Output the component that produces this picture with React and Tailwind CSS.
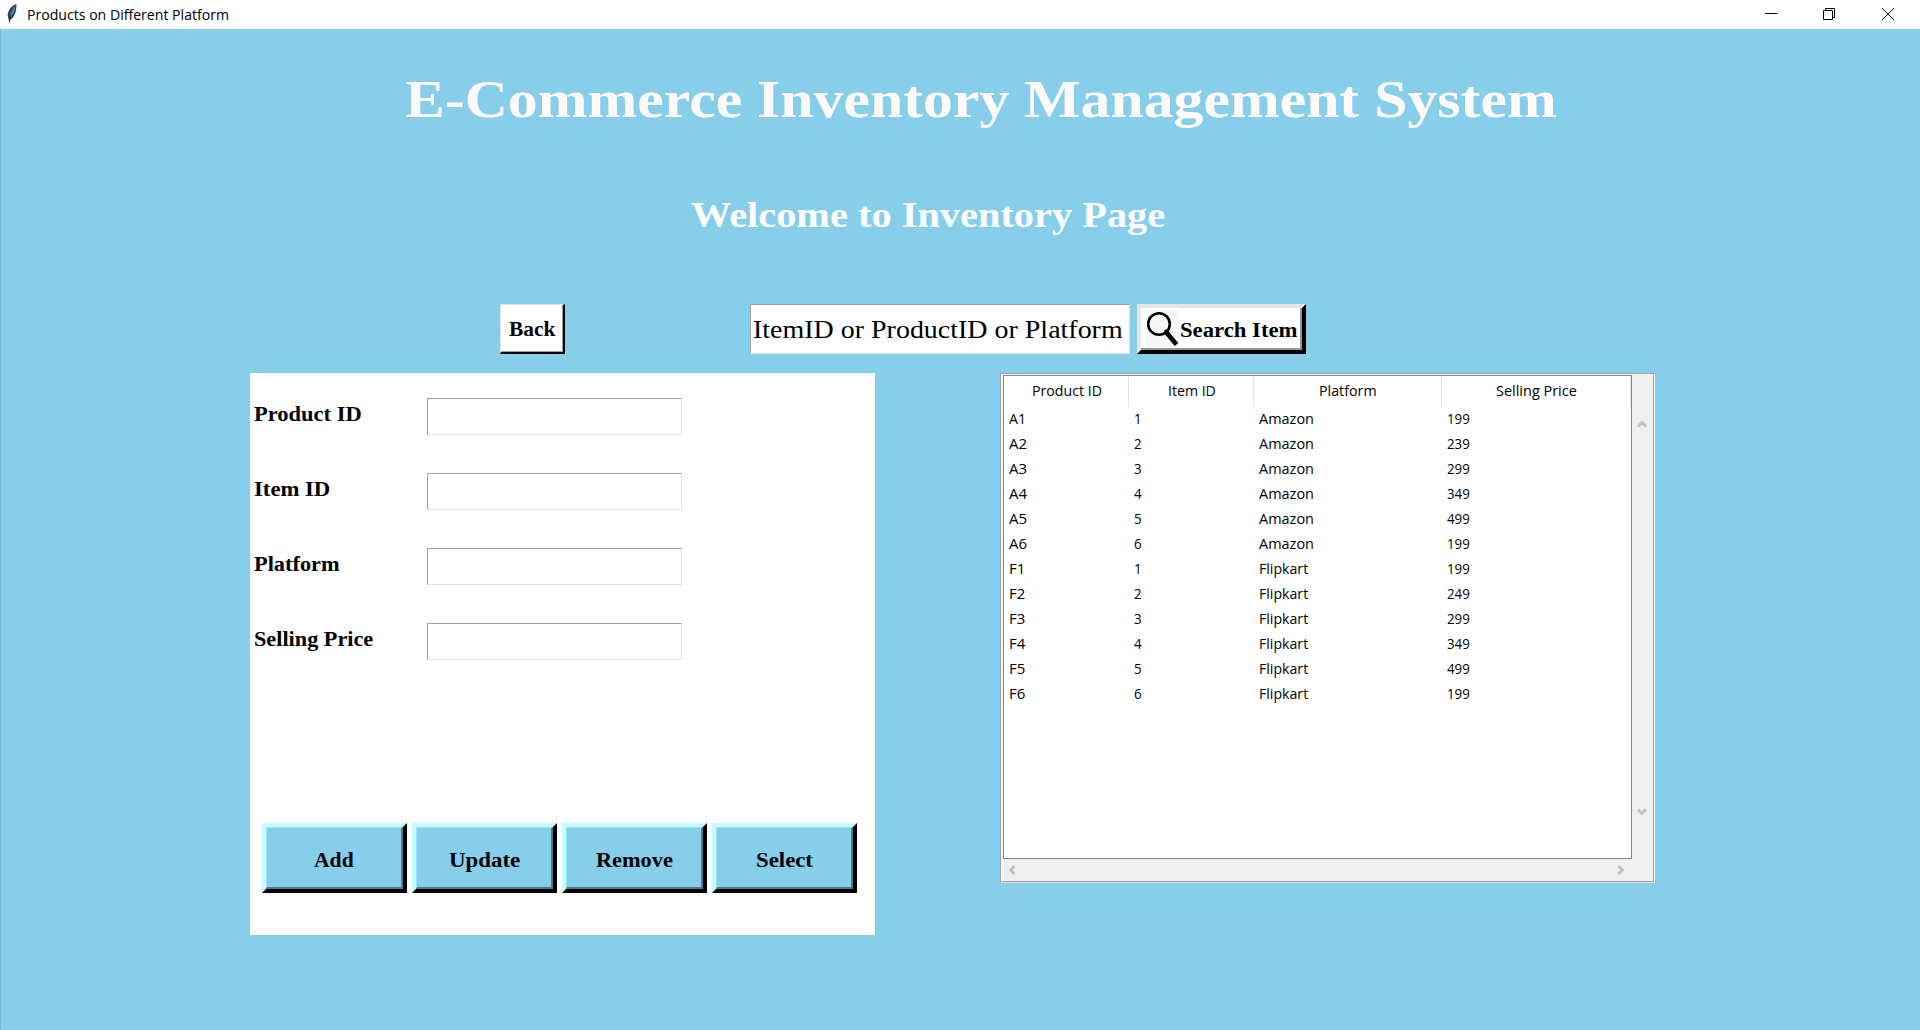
import { useLayoutEffect, useRef, useState } from "react";

const SERIF = "font-['Georgia','Liberation_Serif',serif]";
const SANS = "font-['Segoe_UI','Open_Sans',sans-serif]";

// A line of text stretched horizontally to a set width.
function Fit({ w, className = "", children }) {
  const ref = useRef(null);
  const [scale, setScale] = useState(1);
  useLayoutEffect(() => {
    setScale(w / ref.current.offsetWidth);
  }, [w]);
  return (
    <span className={"block " + className} style={{ width: w }}>
      <span ref={ref} className="inline-block origin-left whitespace-nowrap" style={{ transform: `scaleX(${scale})` }}>
        {children}
      </span>
    </span>
  );
}

function TitleBar() {
  return (
    <header className={"flex h-[29px] items-start bg-white text-black " + SANS}>
      <svg className="ml-[5px] mt-[3px] h-[21px] w-[14px]" viewBox="0 0 14 21">
        <path d="M11.5 1C7 2 3 7 2.6 12.5L3.5 16l1 4 1-3.5C9.500 14 11.500 9 11.500 1z" fill="#33404f" />
        <path d="M10.500 2.500C8 4 5 8 4.300 14.500C8 12 10 8 10.500 2.500z" fill="#5b8fd6" />
        <path d="M9.500 3.500C7 7 5 11 4.500 19" fill="none" stroke="#1d2530" strokeWidth="0.8" />
      </svg>
      <Fit w={202} className="ml-[8px] text-[15px] leading-[28px]">Products on Different Platform</Fit>
      <svg className="ml-auto mr-[25px] mt-[7px] h-[14px] w-[130px]" viewBox="0 0 130 14" fill="none" stroke="#000" strokeWidth="1">
        <path d="M0 6.500H12" />
        <path d="M58.500 3.500h9v9h-9zM60.500 3.500v-2h9v9h-2" />
        <path d="M117 1.200L129 13M129 1.200L117 13" />
      </svg>
    </header>
  );
}

function Toolbar() {
  return (
    <div className="mt-[68px] flex h-[50px] pl-[500px]">
      <button className="h-[50px] w-[65px] border border-t-[#e3e3e3] border-l-[#e3e3e3] border-r-2 border-b-2 border-r-black border-b-black bg-white">
        <span className="flex h-full w-full items-center justify-center border-r border-b border-[#a0a0a0] font-bold">
          <Fit w={46} className="pt-[2px] text-left text-[20px] leading-[46px]">Back</Fit>
        </span>
      </button>
      <div className="ml-[185px] h-[50px] w-[380px] border border-t-[#a0a0a0] border-l-[#a0a0a0] border-r-[#e3e3e3] border-b-[#e3e3e3] bg-white">
        <Fit w={370} className="ml-[2px] text-[26px] leading-[49px]">ItemID or ProductID or Platform</Fit>
      </div>
      <button className="ml-[7px] h-[50px] w-[169px] border-4 border-t-[#e5e5e5] border-l-[#e5e5e5] border-r-black border-b-black bg-white">
        <span className="flex h-full w-full items-center border-r-2 border-b-2 border-[#969696] font-bold">
          <span className="ml-[5px] flex h-[37px] w-[33px] bg-[#f6f6f6]">
            <svg className="h-[37px] w-[33px]" viewBox="0 0 33 37" fill="none" stroke="#000">
              <circle cx="13" cy="14" r="10.800" strokeWidth="2.600" />
              <path d="M20.500 22.500L30.500 34.500" strokeWidth="4.600" />
              <path d="M19 20l3 4" strokeWidth="2.500" />
            </svg>
          </span>
          <Fit w={118} className="ml-px pt-[3px] text-left text-[20px] leading-[46px]">Search Item</Fit>
        </span>
      </button>
    </div>
  );
}

const FIELDS = [
  ["Product ID", 108],
  ["Item ID", 76],
  ["Platform", 86],
  ["Selling Price", 119],
];

const ACTIONS = [
  ["Add", 40],
  ["Update", 71],
  ["Remove", 77],
  ["Select", 57],
];

function FormPanel() {
  return (
    <section className="flex h-[562px] w-[625px] flex-col bg-white pt-[24px] font-bold">
      {FIELDS.map(([label, w]) => (
        <div key={label} className="flex h-[75px] items-start pl-[4px]">
          <div className="w-[173px]">
            <Fit w={w} className="text-[20px] leading-[34px]">{label}</Fit>
          </div>
          <div className="mt-px h-[37px] w-[255px] border border-t-[#a0a0a0] border-l-[#a0a0a0] border-r-[#e3e3e3] border-b-[#e3e3e3]" />
        </div>
      ))}
      <div className="mt-[126px] flex gap-[5px] pl-[12px]">
        {ACTIONS.map(([label, w]) => (
          <button
            key={label}
            className="h-[70px] w-[145px] border-4 border-t-[#c2ffff] border-l-[#c2ffff] border-r-black border-b-black bg-[#87ceeb]"
          >
            <span className="flex h-full w-full items-center justify-center border-t border-l border-r-2 border-b-2 border-t-[#9ee0f2] border-l-[#9ee0f2] border-r-[#51798b] border-b-[#51798b]">
              <Fit w={w} className="pt-[4px] text-left text-[20px] leading-[54px]">{label}</Fit>
            </span>
          </button>
        ))}
      </div>
    </section>
  );
}

const HEADS = [
  ["Product ID", 70],
  ["Item ID", 48],
  ["Platform", 58],
  ["Selling Price", 81],
];

const PRICES = [199, 239, 299, 349, 499, 199, 199, 249, 299, 349, 499, 199];

const ROWS = PRICES.map((price, i) => ({
  id: (i < 6 ? "A" : "F") + ((i % 6) + 1),
  item: (i % 6) + 1,
  platform: i < 6 ? "Amazon" : "Flipkart",
  price,
}));

const COLS = "grid grid-cols-[125px_125px_188px_189px]";

function Chevron({ d, className = "" }) {
  return (
    <svg className={"h-[10px] w-[10px] " + className} viewBox="0 0 10 10" fill="none" stroke="#bfbfbf" strokeWidth="2.800">
      <path d={d} />
    </svg>
  );
}

function TablePanel() {
  return (
    <section
      className={
        "ml-[125px] flex h-[510px] w-[655px] flex-col border border-t-[#a0a0a0] border-l-[#a0a0a0] border-r-white border-b-[#e3e3e3] text-black " +
        SANS
      }
    >
      <div className="flex grow flex-col border border-t-white border-l-white border-r-[#a0a0a0] border-b-[#a0a0a0] bg-[#f0f0f0]">
        <div className="flex">
          <div className="ml-px h-[484px] w-[629px] border border-[#828790] bg-white text-[15px]">
            <div className={COLS + " h-[31px]"}>
              {HEADS.map(([label, w]) => (
                <div key={label} className="flex justify-center border-r border-[#e5e5e5] pl-px leading-[29px]">
                  <Fit w={w}>{label}</Fit>
                </div>
              ))}
            </div>
            {ROWS.map((r) => (
              <div key={r.id} className={COLS + " h-[25px] leading-[22px] [&>*]:ml-[5px]"}>
                <Fit w={r.id === "A1" ? 17 : r.id[0] === "A" ? 18 : 16}>{r.id}</Fit>
                <Fit w={8}>{r.item}</Fit>
                <Fit w={r.platform === "Amazon" ? 55 : 49}>{r.platform}</Fit>
                <Fit w={23}>{r.price}</Fit>
              </div>
            ))}
          </div>
          <div className="flex grow flex-col items-center justify-between pt-[44px] pr-px pb-[42px]">
            <Chevron d="M1 7.500L5 3.500L9 7.500" />
            <Chevron d="M1 2.500L5 6.500L9 2.500" />
          </div>
        </div>
        <div className="flex grow items-center justify-between pb-px pl-[5px] pr-[27px]">
          <Chevron d="M7.500 1L3.500 5L7.500 9" />
          <Chevron d="M2.500 1L6.500 5L2.500 9" />
        </div>
      </div>
    </section>
  );
}

export default function App() {
  return (
    <div className="flex h-[1030px] w-[1920px] flex-col overflow-hidden bg-[#87ceeb]">
      <TitleBar />
      <main className={"grow text-black shadow-[inset_1px_0_0_#76b6d0] " + SERIF}>
        <h1 className="pt-[41px] pl-[405px] font-bold text-[#fffafa]">
          <Fit w={1152} className="text-[52px] leading-[60px]">E-Commerce Inventory Management System</Fit>
        </h1>
        <h2 className="mt-[66px] pl-[691px] font-bold text-white">
          <Fit w={474} className="text-[35px] leading-[40px]">Welcome to Inventory Page</Fit>
        </h2>
        <Toolbar />
        <div className="mt-[19px] flex pl-[250px]">
          <FormPanel />
          <TablePanel />
        </div>
      </main>
    </div>
  );
}
